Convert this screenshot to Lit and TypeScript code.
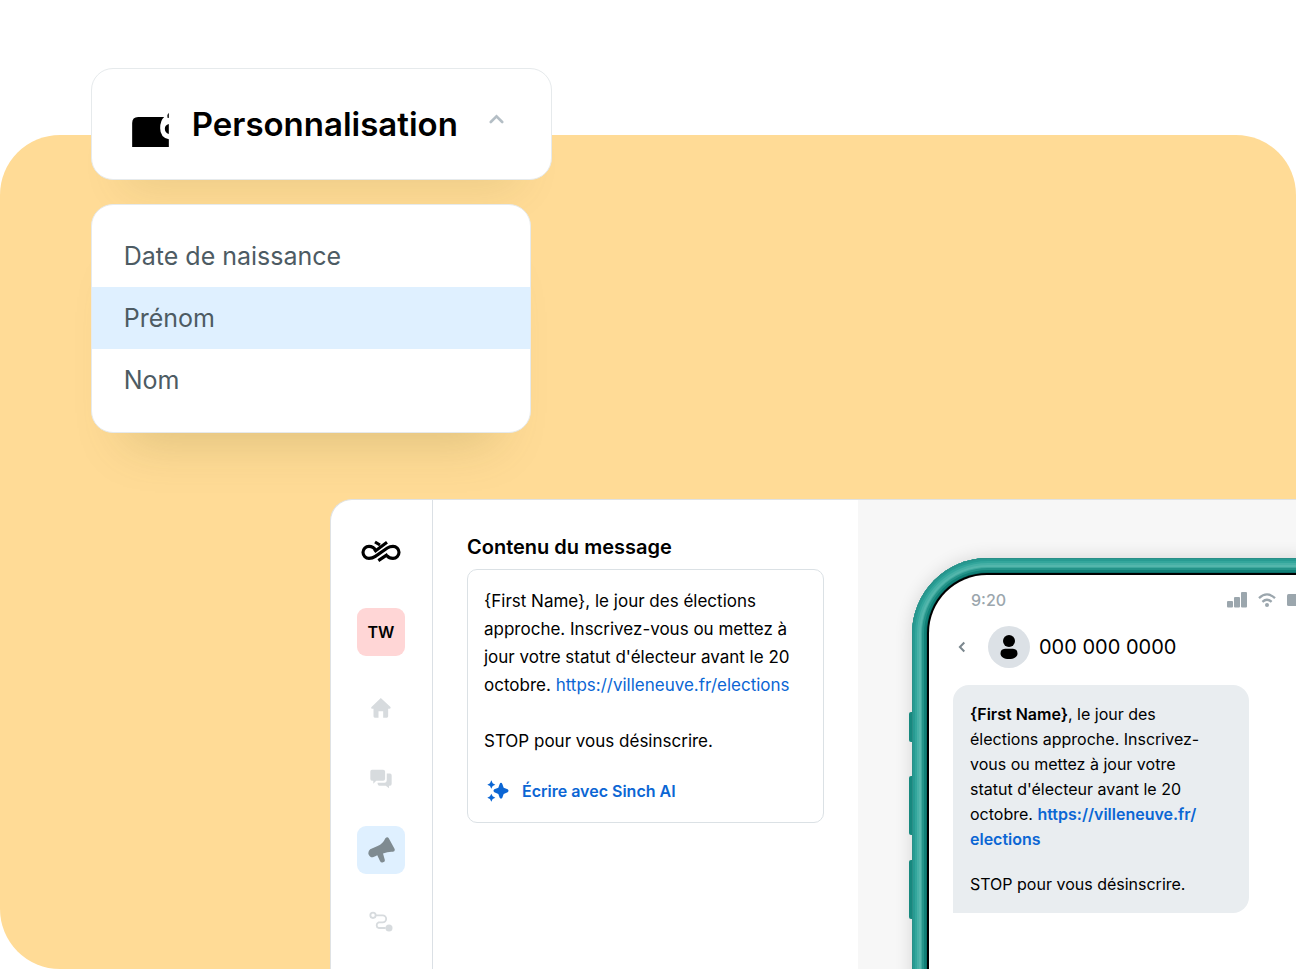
import { LitElement, html, css, svg } from "lit";
import { customElement, property, state } from "lit/decorators.js";
import { classMap } from "lit/directives/class-map.js";

const LINK = "https://villeneuve.fr/elections";

const icons = {
  wallet: svg`<svg width="37" height="35" viewBox="157 155 110 105" aria-hidden="true">
    <path d="M157 260V188Q157 170 175 170H253Q241 180 241 204Q241 232 267 237V260Z"/>
    <path d="M267 191Q255 195 255 205Q255 216 267 221Z"/>
    <path d="M267 157Q261 162 263 172L267 173Z"/></svg>`,
  caret: svg`<svg width="15" height="10" viewBox="0 0 15 10" aria-hidden="true">
    <path d="M1.8 8L7.5 2.4L13.2 8" fill="none" stroke="#b4bec5" stroke-width="2.6" stroke-linecap="round"/></svg>`,
  logo: svg`<svg width="40" height="22" viewBox="125 150 120 66" fill="none" stroke="#000" stroke-width="9.5" stroke-linecap="butt" aria-hidden="true">
    <path d="M168 180C164 172 158 169 149 169A18 18 0 0 0 149 205C157 205 162 203 168 199L204 174C210 170 215 169 221 169A18 18 0 0 1 221 205C213 205 208 203 203 197"/>
    <path d="M165 185L203 157M167 156L182 165M177 212L205 193"/></svg>`,
  home: svg`<svg width="20" height="20" viewBox="95 54 59 60" fill="#d7dbde" aria-hidden="true">
    <path d="M124 54L153 81Q155 86 149 86H146V109Q146 113 142 113H131V94H117V113H106Q102 113 102 109V86H98Q93 86 96 81Z"/></svg>`,
  chat: svg`<svg width="22" height="20" viewBox="90 268 67 59" fill="#d7dbde" aria-hidden="true">
    <path d="M96 269H130Q136 269 136 275V297Q136 303 130 303H109L100 312V303H96Q91 303 91 297V275Q91 269 96 269Z"/>
    <path d="M141 281H151Q156 281 156 287V312Q156 318 151 318H148V326L138 318H119Q113 318 113 309H134Q141 309 141 300Z"/></svg>`,
  megaphone: svg`<svg width="27" height="26" viewBox="83 477 79 77" fill="#7f8b91" aria-hidden="true">
    <path d="M134 481Q140 475 144 481L161 512Q164 519 156 521Q142 520 127 526L132 544Q134 550 127 552Q121 554 118 548L110 531Q105 534 97 537Q88 538 84 528Q82 519 89 513L111 504Q127 497 134 481Z"/></svg>`,
  route: svg`<svg width="24" height="21" viewBox="88 693 72 63" fill="none" stroke="#d7dbde" stroke-width="5.5" aria-hidden="true">
    <circle cx="100" cy="706" r="8"/><path d="M108 706H129A10.500 10.500 0 0 1 129 727H117A9 9 0 0 0 117 744H138"/>
    <circle cx="148" cy="744" r="10.500" fill="#d7dbde" stroke="none"/></svg>`,
  sparkle: svg`<svg width="22" height="22" viewBox="81 213 66 66" fill="#0b66d4" aria-hidden="true">
    <path d="M123 221Q125.500 221 127 225L131 236L143 241Q148 245.500 143 250L131 255L127 266Q123 271 119 266L115 255L103 250Q98 245.500 103 241L115 236L119 225Q120.500 221 123 221Z"/>
    <path d="M94 214L98 223L106 227L98 231L94 239L90 231L82 227L90 223Z"/>
    <path d="M94 254L98 262L106 266L98 270L94 278L90 270L82 266L90 262Z"/></svg>`,
  back: svg`<svg width="8" height="12" viewBox="0 0 8 12" aria-hidden="true">
    <path d="M6.300 1.500L1.900 6L6.300 10.500" fill="none" stroke="#7b878e" stroke-width="2"/></svg>`,
  person: svg`<svg width="18" height="24" viewBox="0 0 18 24" aria-hidden="true">
    <circle cx="9" cy="6" r="6"/><path d="M5 13.700H13A4.800 4.800 0 0 1 17.500 18.500C17.500 22 14 24 9 24S.5 22 .5 18.500A4.800 4.800 0 0 1 5 13.700Z"/></svg>`,
  signal: svg`<svg width="20" height="16" viewBox="0 0 20 16" fill="#9ba6ad" aria-hidden="true">
    <rect y="9" width="6" height="6.500" rx="1"/><rect x="7" y="5" width="6" height="10.500" rx="1"/><rect x="14" width="6" height="15.500" rx="1"/></svg>`,
  wifi: svg`<svg width="18" height="14" viewBox="0 0 18 14" fill="none" stroke="#9ba6ad" stroke-width="2.300" aria-hidden="true">
    <path d="M1 5.200Q9 -2.400 17 5.200M4.400 8.800Q9 4.600 13.600 8.800"/><circle cx="9" cy="12" r="2" fill="#9ba6ad" stroke="none"/></svg>`,
  battery: svg`<svg width="24" height="12" viewBox="0 0 24 12" fill="#9ba6ad" aria-hidden="true">
    <rect width="21" height="12" rx="1.500"/><rect x="22" y="4" width="2" height="4"/></svg>`,
};

const base = css`
  * { box-sizing: border-box; }
  button { font: inherit; color: inherit; background: none; border: 0; padding: 0; margin: 0; cursor: pointer; }
  a { text-decoration: none; color: #0b66d4; }
  p { margin: 0; }
  svg { display: block; flex: none; }
`;

@customElement("field-picker")
export class FieldPicker extends LitElement {
  @state() private open = true;
  @state() private selected = "Prénom";
  private fields = ["Date de naissance", "Prénom", "Nom"];

  static styles = [base, css`
    :host { display: flex; flex-direction: column; align-items: flex-start; gap: 24px; }
    .trigger, .menu {
      background: #fff; border: 1px solid #e6eaec; border-radius: 22px;
      box-shadow: 0 44px 48px -36px rgba(100, 100, 30, 0.22);
    }
    .trigger {
      display: flex; align-items: center; width: 461px; max-width: 100%; height: 112px; padding: 0 47px 0 40px;
      font-size: 33px; font-weight: 600; line-height: 44px;
      box-shadow: 0 40px 44px -34px rgba(100, 100, 30, 0.14);
    }
    .label { flex: 1; text-align: left; padding-left: 23px; }
    .wallet { padding-top: 10px; }
    .caret { padding-bottom: 10px; }
    .menu {
      list-style: none; margin: 0; padding: 20px 0; width: 440px; max-width: 100%; min-height: 229px;
    }
    .option {
      display: block; width: 100%; height: 62px; padding: 0 32px; text-align: left;
      font-size: 25px; color: #4d5b63;
    }
    .chosen { background: #dff0ff; }
  `];

  render() {
    return html`
      <button class="trigger" aria-expanded=${this.open} @click=${() => (this.open = !this.open)}>
        <span class="wallet">${icons.wallet}</span>
        <span class="label">Personnalisation</span>
        <span class="caret">${icons.caret}</span>
      </button>
      ${this.open ? html`<ul class="menu">
        ${this.fields.map((f) => html`<li>
          <button class=${classMap({ option: true, chosen: f === this.selected })}
            aria-pressed=${f === this.selected}
            @click=${() => (this.selected = f)}>${f}</button></li>`)}
      </ul>` : ""}`;
  }
}

@customElement("side-nav")
export class SideNav extends LitElement {
  @property() active = "Campagnes";

  static styles = [base, css`
    :host { display: block; width: 102px; flex: none; border-right: 1px solid #dbe0e5; }
    .nav { display: flex; flex-direction: column; align-items: center; padding: 27px 1px 0 0; }
    .tile { display: flex; align-items: center; justify-content: center; width: 48px; height: 48px; border-radius: 9px; }
    .account { background: #ffd6d6; font-size: 16px; font-weight: 600; margin: 33px 0 28px; }
    .links { display: flex; flex-direction: column; gap: 23px; }
    .active { background: #dff0ff; }
  `];

  render() {
    const links = [
      ["Accueil", icons.home],
      ["Conversations", icons.chat],
      ["Campagnes", icons.megaphone],
      ["Parcours", icons.route],
    ] as const;
    return html`<nav class="nav">
      <a class="tile" href="#" aria-label="Sinch">${icons.logo}</a>
      <button class="tile account">TW</button>
      <div class="links">
        ${links.map(([name, icon]) => html`
          <a class=${classMap({ tile: true, active: name === this.active })} href="#" aria-label=${name}>${icon}</a>`)}
      </div>
    </nav>`;
  }
}

@customElement("message-composer")
export class MessageComposer extends LitElement {
  static styles = [base, css`
    :host { display: block; width: 425px; flex: none; padding: 33px 34px; }
    .title { margin: 0 0 8px; font-size: 20px; line-height: 28px; font-weight: 600; }
    .box {
      border: 1px solid #dbe1e5; border-radius: 10px; padding: 17px 16px;
      font-size: 17px; line-height: 28px; white-space: nowrap;
    }
    .stop { margin-top: 28px; }
    .ai { display: flex; align-items: center; gap: 13px; margin-top: 22px; padding-left: 3px; color: #0b66d4; font-size: 16px; font-weight: 600; }
  `];

  render() {
    return html`
      <h2 class="title">Contenu du message</h2>
      <div class="box">
        <p>{First Name}, le jour des élections<br>approche. Inscrivez-vous ou mettez à<br>jour votre statut d'électeur avant le 20<br>octobre. <a href=${LINK}>${LINK}</a></p>
        <p class="stop">STOP pour vous désinscrire.</p>
        <button class="ai">${icons.sparkle}<span>Écrire avec Sinch AI</span></button>
      </div>`;
  }
}

@customElement("phone-preview")
export class PhonePreview extends LitElement {
  static styles = [base, css`
    :host { display: flex; flex: 1; min-width: 0; padding: 58px 0 0 54px; background: #f7f7f7; overflow: hidden; }
    .phone {
      position: relative; flex: none; display: flex; width: 458px; margin-bottom: -24px;
      border-radius: 76px 76px 0 0; background: #0b6e68;
      box-shadow: 0 0 18px rgba(0, 0, 0, 0.14);
    }
    .frame {
      flex: 1; display: flex; padding: 15px 15px 0; border-radius: inherit;
      box-shadow:
        inset 0 0 0 1px #2a8f88, inset 0 0 0 3px #279b92, inset 0 0 0 5px #33a69c,
        inset 0 0 0 7px #46b0a6, inset 0 0 0 9px #54b6ac, inset 0 0 0 10px #3fa89e,
        inset 0 0 0 12px #249389, inset 0 0 0 14px #108077;
    }
    .key { position: absolute; left: -3px; width: 3px; height: 59px; border-radius: 2px 0 0 2px; background: #17897f; }
    .mute { top: 154px; height: 30px; }
    .up { top: 218px; }
    .down { top: 302px; }
    .screen { flex: 1; background: #fff; border: 2px solid #000; border-bottom: 0; border-radius: 60px 60px 0 0; padding-top: 13px; }
    .status {
      display: flex; align-items: center; justify-content: space-between; height: 24px; padding: 0 42px;
      font-size: 16px; font-weight: 500; color: #9ba6ad;
    }
    .radios { display: flex; align-items: center; gap: 11px; }
    .contact { display: flex; align-items: center; height: 42px; margin: 14px 0 17px; padding-left: 29px; font-size: 20px; }
    .avatar {
      display: flex; align-items: center; justify-content: center; width: 42px; height: 42px;
      border-radius: 50%; background: #dce1e6; margin: 0 9px 0 22px;
    }
    .bubble {
      width: 296px; margin-left: 24px; padding: 17px 17px 16px; border-radius: 16px 16px 16px 0;
      background: #e9edf0; font-size: 16px; line-height: 25px; white-space: nowrap;
    }
    .link, .name { font-weight: 600; }
    .stop { margin-top: 20px; }
  `];

  render() {
    return html`<section class="phone" aria-label="Aperçu">
      <span class="key mute"></span><span class="key up"></span><span class="key down"></span>
      <div class="frame"><div class="screen">
        <div class="status"><span>9:20</span><span class="radios">${icons.signal}${icons.wifi}${icons.battery}</span></div>
        <div class="contact">
          <button aria-label="Retour">${icons.back}</button>
          <span class="avatar">${icons.person}</span>
          <span>000 000 0000</span>
        </div>
        <div class="bubble">
          <p><span class="name">{First Name}</span>, le jour des<br>élections approche. Inscrivez-<br>vous ou mettez à jour votre<br>statut d'électeur avant le 20<br>octobre. <a class="link" href=${LINK}>https://villeneuve.fr/<br>elections</a></p>
          <p class="stop">STOP pour vous désinscrire.</p>
        </div>
      </div></div>
    </section>`;
  }
}

@customElement("app-root")
export class AppRoot extends LitElement {
  static styles = [base, css`
    :host { display: block; background: #fff; color: #000; font-family: Inter, "Noto Sans", sans-serif; }
    .page { display: grid; min-height: 100vh; padding-bottom: 1px; overflow: hidden; }
    .backdrop { grid-area: 1 / 1; margin-top: 135px; border-radius: 60px; background: #ffdb96; }
    .content { grid-area: 1 / 1; display: flex; flex-direction: column; padding-top: 68px; min-width: 0; z-index: 1; }
    .picker { margin-left: 7%; min-height: 365px; }
    .window {
      flex: 1; display: flex; margin: 66px 0 0 330px; min-width: 0; overflow: hidden;
      background: #fff; border: 1px solid #dfe2e4; border-width: 1px 0 0 1px; border-radius: 22px 0 0 0;
    }
  `];

  render() {
    return html`<main class="page">
      <div class="backdrop"></div>
      <div class="content">
        <field-picker class="picker"></field-picker>
        <div class="window">
          <side-nav></side-nav>
          <message-composer></message-composer>
          <phone-preview></phone-preview>
        </div>
      </div>
    </main>`;
  }
}
